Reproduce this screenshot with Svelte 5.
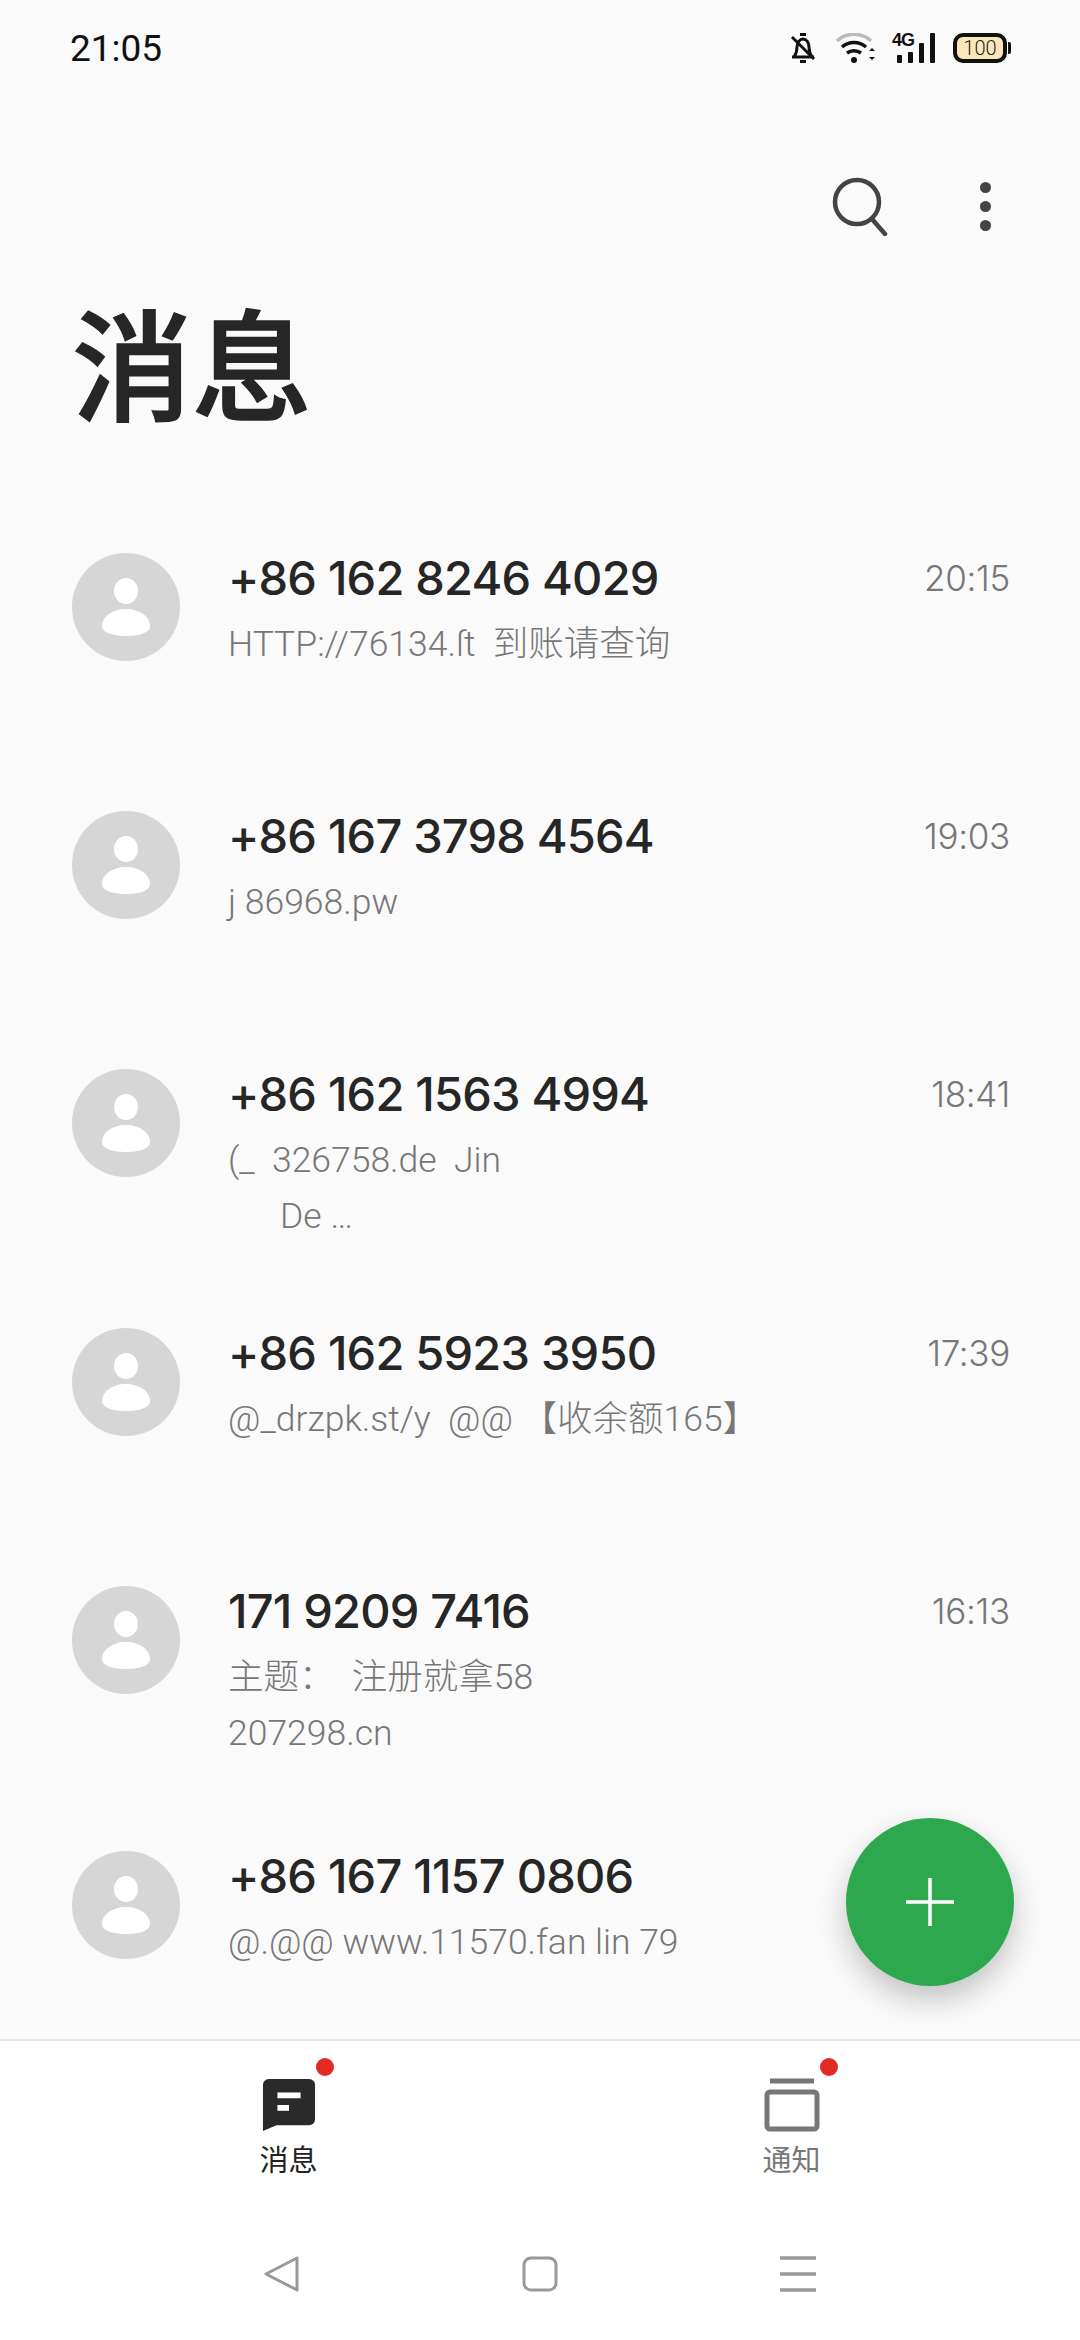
<script>
	const messages = [
		{ name: '+86 162 8246 4029', time: '20:15', lines: ['HTTP://76134.ſt  到账请查询'], height: 258 },
		{ name: '+86 167 3798 4564', time: '19:03', lines: ['j 86968.pw'], height: 258 },
		{ name: '+86 162 1563 4994', time: '18:41', lines: ['(_  326758.de  Jin', '      De …'], height: 259 },
		{ name: '+86 162 5923 3950', time: '17:39', lines: ['@_drzpk.st/y  @@ 【收余额165】'], height: 258 },
		{ name: '171 9209 7416', time: '16:13', lines: ['主题：  注册就拿58', '207298.cn'], height: 265 },
		{ name: '+86 167 1157 0806', time: '', lines: ['@.@@ www.11570.fan lin 79'], height: 188 }
	];
</script>

<div class="screen">
	<header class="status">
		<span class="clock">21:05</span>
		<div class="status-icons">
			<svg class="bell" width="26" height="30" viewBox="0 0 26 30" fill="none" stroke="#111" stroke-width="3">
				<path d="M2 24h22M4 24c2-3 3-5 3-10 0-5 3-8 6-8s6 3 6 8c0 5 1 7 3 10" stroke-linejoin="round" />
				<path d="M10 1.500h6M10 28.500h6" />
				<path d="M2 4l22 22" />
			</svg>
			<svg class="wifi" width="39" height="30" viewBox="0 0 39 30" fill="none">
				<path d="M1 8C10-1 26-1 35 8" stroke="#bbb" stroke-width="3.500" />
				<path d="M6 14C13 8 23 8 30 14M11 20C15 17 21 17 25 20" stroke="#111" stroke-width="3.500" />
				<circle cx="18" cy="27" r="3" fill="#111" />
				<path d="M33 18l3-3 3 3zM33 24l3 3 3-3z" fill="#111" />
			</svg>
			<div class="signal">
				<span class="net">4G</span>
				<svg width="43" height="30" viewBox="0 0 43 30" fill="#111">
					<rect x="5" y="22" width="5" height="8" rx="1" />
					<rect x="16" y="19" width="5" height="11" rx="1" />
					<rect x="27" y="10" width="5" height="20" rx="1" />
					<rect x="38" y="0" width="5" height="30" rx="1" />
				</svg>
			</div>
			<div class="battery">
				<span class="battery-body">100</span>
				<span class="battery-cap"></span>
			</div>
		</div>
	</header>

	<div class="toolbar">
		<svg width="60" height="60" viewBox="0 0 60 60" fill="none" stroke="#444" stroke-width="4.500">
			<circle cx="27" cy="26" r="22" />
			<path d="M42 43l13 15" stroke-linecap="round" />
		</svg>
		<div class="more"><i></i><i></i><i></i></div>
	</div>

	<h1>消息</h1>

	<main class="list">
		{#each messages as m}
			<div class="row" style="height: {m.height}px">
				<div class="avatar">
					<svg width="50" height="58" viewBox="0 0 50 58" fill="#fff">
						<ellipse cx="25" cy="13" rx="12" ry="13" />
						<path d="M25 31c14 0 24 8 24 17 0 7-12 10-24 10S1 55 1 48c0-9 10-17 24-17z" />
					</svg>
				</div>
				<div class="body">
					<div class="name">{m.name}</div>
					{#each m.lines as line}
						<div class="preview">{line}</div>
					{/each}
				</div>
				<div class="time">{m.time}</div>
			</div>
		{/each}
		<button class="fab" aria-label="新建">
			<svg width="48" height="48" viewBox="0 0 48 48" stroke="#fff" stroke-width="3.500">
				<path d="M24 0v48M0 24h48" />
			</svg>
		</button>
	</main>

	<nav class="tabs">
		<div class="tab active">
			<div class="tab-icon">
				<svg width="54" height="54" viewBox="0 0 56 56">
					<path d="M1 7a6 6 0 0 1 6-6h42a6 6 0 0 1 6 6v36a6 6 0 0 1-6 6H15L1 55z" fill="#2a2a2a" />
					<rect x="16" y="15" width="24" height="6" fill="#fff" />
					<rect x="16" y="28" width="12" height="6" fill="#fff" />
				</svg>
				<span class="dot"></span>
			</div>
			<span class="tab-label">消息</span>
		</div>
		<div class="tab">
			<div class="tab-icon">
				<svg width="56" height="54" viewBox="0 0 56 54" fill="none" stroke="#777" stroke-width="5">
					<path d="M6 3h44" />
					<rect x="3" y="14" width="50" height="37" rx="3" />
				</svg>
				<span class="dot"></span>
			</div>
			<span class="tab-label">通知</span>
		</div>
	</nav>

	<footer class="navbar">
		<svg width="36" height="36" viewBox="0 0 36 36" fill="none" stroke="#999" stroke-width="3" stroke-linejoin="round">
			<path d="M33 2v32L2 18z" />
		</svg>
		<svg width="36" height="36" viewBox="0 0 36 36" fill="none" stroke="#999" stroke-width="3">
			<rect x="2" y="2" width="32" height="32" rx="7" />
		</svg>
		<svg width="36" height="36" viewBox="0 0 36 36" stroke="#999" stroke-width="3.500">
			<path d="M0 2h36M0 18h36M0 34h36" />
		</svg>
	</footer>
</div>

<style>
	:global(body) {
		background: #fafafa;
	}
	.screen {
		width: 1080px;
		height: 2340px;
		display: flex;
		flex-direction: column;
		overflow: hidden;
		background: #fafafa;
		font-family: Roboto, 'Noto Sans CJK SC', sans-serif;
		color: #262626;
	}
	.status {
		height: 96px;
		padding: 0 69px 0 70px;
		display: flex;
		align-items: center;
		justify-content: space-between;
	}
	.clock {
		font-size: 37px;
		color: #111;
	}
	.status-icons {
		display: flex;
		align-items: center;
	}
	.wifi {
		margin-left: 20px;
	}
	.signal {
		display: flex;
		align-items: flex-start;
		margin-left: 17px;
	}
	.net {
		font-size: 18px;
		font-weight: 700;
		width: 0;
		color: #111;
		line-height: 15px;
		letter-spacing: -1px;
		font-family: 'Liberation Sans', sans-serif;
	}
	.battery {
		display: flex;
		align-items: center;
		margin-left: 18px;
	}
	.battery-body {
		width: 54px;
		height: 30px;
		box-sizing: border-box;
		border: 4px solid #111;
		border-radius: 10px;
		background: #fbe7b8;
		font-size: 20px;
		font-weight: 300;
		line-height: 22px;
		text-align: center;
		color: #222;
	}
	.battery-cap {
		width: 3px;
		height: 12px;
		margin-left: 1px;
		background: #111;
		border-radius: 0 2px 2px 0;
	}
	.toolbar {
		height: 112px;
		margin-top: 54px;
		padding: 0 89px 0 0;
		display: flex;
		align-items: center;
		justify-content: flex-end;
		gap: 90px;
	}
	.more {
		display: flex;
		flex-direction: column;
		gap: 8px;
	}
	.more i {
		width: 11px;
		height: 11px;
		border-radius: 50%;
		background: #444;
	}
	h1 {
		margin: 0;
		height: 291px;
		box-sizing: border-box;
		padding: 23px 0 0 72px;
		font-size: 120px;
		font-weight: 500;
		-webkit-text-stroke: 1.500px #262626;
		line-height: 172px;
	}
	.list {
		position: relative;
		flex: 1;
	}
	.row {
		display: flex;
		align-items: flex-start;
		padding: 0 70px 0 72px;
		box-sizing: border-box;
	}
	.avatar {
		width: 108px;
		height: 108px;
		border-radius: 50%;
		background: #d6d6d6;
		display: flex;
		align-items: center;
		justify-content: center;
		flex-shrink: 0;
	}
	.body {
		margin-left: 48px;
		flex: 1;
		margin-top: -6px;
	}
	.name {
		font-family: Inter, 'Noto Sans CJK SC', sans-serif;
		font-size: 47px;
		letter-spacing: -0.800px;
		line-height: 62px;
		font-weight: 500;
		margin-bottom: 7px;
	}
	.preview {
		font-size: 35.500px;
		line-height: 56px;
		font-weight: 300;
		color: #777;
		white-space: pre;
	}
	.time {
		font-family: Inter, 'Noto Sans CJK SC', sans-serif;
		font-size: 35px;
		letter-spacing: -0.300px;
		line-height: 40px;
		margin-top: 5px;
		font-weight: 300;
		color: #777;
	}
	.fab {
		position: absolute;
		right: 66px;
		bottom: 53px;
		width: 168px;
		height: 168px;
		border: 0;
		padding: 0;
		border-radius: 50%;
		background: #2da84f;
		box-shadow: 0 14px 30px rgba(0, 0, 0, 0.22);
		display: flex;
		align-items: center;
		justify-content: center;
	}
	.tabs {
		height: 196px;
		background: #fff;
		border-top: 2px solid #e6e6e6;
		display: flex;
		justify-content: center;
		box-sizing: border-box;
	}
	.tab {
		width: 503px;
		padding-top: 37px;
		display: flex;
		flex-direction: column;
		align-items: center;
		color: #777;
	}
	.tab-icon {
		position: relative;
		height: 54px;
	}
	.tab-label {
		font-size: 29px;
		line-height: 44px;
		margin-top: 7px;
	}
	.tab.active .tab-label {
		color: #222;
	}
	.dot {
		position: absolute;
		top: -20px;
		right: -18px;
		width: 18px;
		height: 18px;
		border-radius: 50%;
		background: #e32b25;
	}
	.navbar {
		height: 105px;
		flex-shrink: 0;
		box-sizing: border-box;
		background: #fff;
		display: flex;
		justify-content: center;
		align-items: flex-start;
		gap: 222px;
		padding-top: 21px;
	}
</style>
